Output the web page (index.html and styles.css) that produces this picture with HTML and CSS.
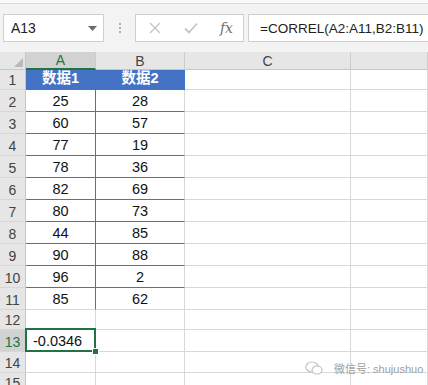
FILE: index.html
```html
<!DOCTYPE html>
<html lang="zh-CN">
<head>
    <meta charset="UTF-8">
    <title>CORREL</title>
    <link rel="stylesheet" href="styles.css">
</head>
<body>

    <div class="toolbar">
        <div class="namebox">
            <span>A13</span>
            <svg class="caret" width="9" height="5" viewBox="0 0 9 5"><path d="M0 0H9L4.5 5Z" fill="#6b6b6b"/></svg>
        </div>
        <div class="grip"><i></i><i></i><i></i></div>
        <div class="fxbtns">
            <svg width="14" height="14" viewBox="0 0 14 14"><path d="M2 2L12 12M12 2L2 12" stroke="#c4c4c4" stroke-width="1.4"/></svg>
            <svg width="16" height="14" viewBox="0 0 16 14"><path d="M2 7.5L6 11.5L14 2.5" stroke="#c4c4c4" stroke-width="1.8" fill="none"/></svg>
            <span class="fx">fx</span>
        </div>
        <div class="formula">=CORREL(A2:A11,B2:B11)</div>
    </div>

    <div class="sheet">
        <div class="corner"><svg width="9" height="9" viewBox="0 0 9 9"><path d="M9 0V9H0Z" fill="#b9b9b9"/></svg></div>
        <div class="colhead active">A</div>
        <div class="colhead">B</div>
        <div class="colhead">C</div>
        <div class="colhead"></div>

        <div class="rowhead">1</div><div class="cell title">数据1</div><div class="cell title">数据2</div><div class="cell"></div><div class="cell"></div>
        <div class="rowhead">2</div><div class="cell blue mid">25</div><div class="cell blue">28</div><div class="cell"></div><div class="cell"></div>
        <div class="rowhead">3</div><div class="cell blue mid">60</div><div class="cell blue">57</div><div class="cell"></div><div class="cell"></div>
        <div class="rowhead">4</div><div class="cell blue mid">77</div><div class="cell blue">19</div><div class="cell"></div><div class="cell"></div>
        <div class="rowhead">5</div><div class="cell blue mid">78</div><div class="cell blue">36</div><div class="cell"></div><div class="cell"></div>
        <div class="rowhead">6</div><div class="cell blue mid">82</div><div class="cell blue">69</div><div class="cell"></div><div class="cell"></div>
        <div class="rowhead">7</div><div class="cell blue mid">80</div><div class="cell blue">73</div><div class="cell"></div><div class="cell"></div>
        <div class="rowhead">8</div><div class="cell blue mid">44</div><div class="cell blue">85</div><div class="cell"></div><div class="cell"></div>
        <div class="rowhead">9</div><div class="cell blue mid">90</div><div class="cell blue">88</div><div class="cell"></div><div class="cell"></div>
        <div class="rowhead">10</div><div class="cell blue mid">96</div><div class="cell blue">2</div><div class="cell"></div><div class="cell"></div>
        <div class="rowhead">11</div><div class="cell num mid">85</div><div class="cell num">62</div><div class="cell"></div><div class="cell"></div>
        <div class="rowhead">12</div><div class="cell"></div><div class="cell"></div><div class="cell"></div><div class="cell"></div>
        <div class="rowhead active">13</div><div class="cell selected">-0.0346</div><div class="cell"></div><div class="cell"></div><div class="cell"></div>
        <div class="rowhead">14</div><div class="cell"></div><div class="cell"></div><div class="cell"></div><div class="cell"></div>
        <div class="rowhead last">15</div><div class="cell"></div><div class="cell"></div><div class="cell"></div><div class="cell"></div>

        <div class="watermark">
            <svg width="18" height="14" viewBox="0 0 18 14"><ellipse cx="7" cy="6" rx="6.2" ry="5" fill="none" stroke="#c0c0c0" stroke-width="1.2"/><ellipse cx="12" cy="9" rx="5" ry="4" fill="#fff" stroke="#c0c0c0" stroke-width="1.2"/></svg>
            <span>微信号: shujushuo</span>
        </div>
    </div>

</body>
</html>
```

FILE: styles.css
```css
body {
    margin: 0;
    font-family: "Liberation Sans", Arial, "Noto Sans CJK SC", sans-serif;
    background-color: #ffffff;
    width: 428px;
    height: 385px;
    overflow: hidden;
}

.toolbar {
    height: 52px;
    box-sizing: border-box;
    padding: 11px 0 0 3px;
    background-color: #f3f3f3;
    border-top: 3px solid #fafafa;
    box-shadow: inset 0 1px 0 #dcdcdc;
    display: flex;
    align-items: flex-start;
}

.namebox, .fxbtns, .formula {
    height: 28px;
    box-sizing: border-box;
    background-color: #ffffff;
    border: 1px solid #cfcfcf;
    display: flex;
    align-items: center;
    flex-shrink: 0;
}

.namebox {
    width: 101px;
    padding: 0 6px 0 7px;
    justify-content: space-between;
    font-size: 14px;
    color: #222;
}

.grip {
    width: 31px;
    flex-shrink: 0;
    display: flex;
    flex-direction: column;
    align-items: center;
    gap: 2px;
    padding-top: 9px;
}

.grip i {
    width: 2px;
    height: 2px;
    background-color: #b0b0b0;
}

.fxbtns {
    width: 109px;
    padding: 0 10px 0 12px;
    justify-content: space-between;
}

.fx {
    font-family: "DejaVu Serif", "Liberation Serif", serif;
    font-style: italic;
    font-size: 14px;
    color: #707070;
}

.formula {
    flex: 1 1 0;
    min-width: 0;
    margin-left: 4px;
    padding-left: 11px;
    font-size: 13.5px;
    color: #222;
    border-right: none;
    white-space: nowrap;
    overflow: hidden;
}

.sheet {
    position: relative;
    display: grid;
    grid-template-columns: 26px 70px 89px 166px 1fr;
    grid-template-rows: 18px 20px repeat(10, 22px) 20px 22px 21px 1fr;
    height: 333px;
}

.corner {
    background-color: #e6e6e6;
    border-right: 1px solid #c8c8c8;
    border-bottom: 1px solid #c8c8c8;
    display: flex;
    align-items: flex-end;
    justify-content: flex-end;
    padding: 0 2px 2px 0;
}

.colhead {
    background-color: #e6e6e6;
    border-right: 1px solid #cccccc;
    border-bottom: 1px solid #c6c6c6;
    font-size: 14px;
    color: #444;
    display: flex;
    align-items: center;
    justify-content: center;
}

.colhead.active {
    background-color: #d2d2d2;
    color: #217346;
    border-bottom: 2px solid #217346;
}

.rowhead {
    background-color: #e6e6e6;
    border-right: 1px solid #c6c6c6;
    border-bottom: 1px solid #d6d6d6;
    font-size: 14px;
    color: #444;
    display: flex;
    align-items: flex-end;
    justify-content: center;
    padding-bottom: 1px;
}

.rowhead.last {
    align-items: flex-start;
    padding-top: 2px;
}

.rowhead.active {
    background-color: #d2d2d2;
    color: #217346;
}

.cell {
    border-right: 1px solid #d8d8d8;
    border-bottom: 1px solid #d8d8d8;
    font-size: 14.5px;
    color: #111;
    display: flex;
    align-items: flex-end;
    justify-content: center;
    padding-bottom: 2px;
}

.cell.title {
    background-color: #4472c4;
    color: #ffffff;
    font-weight: bold;
    border-right-color: #4472c4;
    border-bottom-color: #4472c4;
}

.cell.blue {
    border-bottom-color: #4472c4;
}

.cell.mid {
    border-right-color: #4472c4;
}

.cell.selected {
    position: relative;
    justify-content: flex-start;
    padding-left: 7px;
}

.cell.selected::after {
    content: "";
    position: absolute;
    left: -1px;
    top: -2px;
    right: -1px;
    bottom: -1px;
    border: 2px solid #217346;
}

.cell.selected::before {
    content: "";
    position: absolute;
    right: -4px;
    bottom: -4px;
    width: 5px;
    height: 5px;
    background-color: #217346;
    border: 1px solid #ffffff;
    z-index: 1;
}

.watermark {
    position: absolute;
    left: 305px;
    top: 308px;
    display: flex;
    align-items: center;
    gap: 11px;
    font-size: 11px;
    color: #a0a0a0;
}
```
